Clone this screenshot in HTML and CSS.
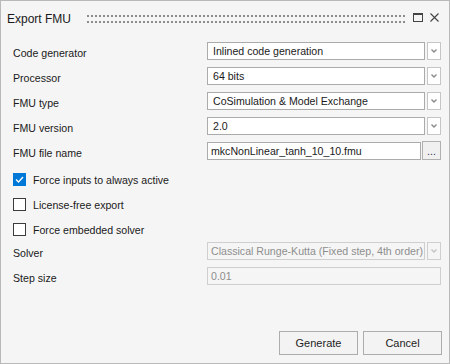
FILE: index.html
```html
<!DOCTYPE html>
<html>
<head>
<meta charset="utf-8">
<link rel="stylesheet" href="styles.css">
</head>
<body>
<div class="window">
  <div class="titlebar">
    <span class="title">Export FMU</span>
    <svg class="grip" width="320" height="8" viewBox="0 0 320 8"><defs><pattern id="dots" width="4" height="6" patternUnits="userSpaceOnUse"><rect width="2" height="2" fill="#8c8c8c"/></pattern></defs><rect width="320" height="8" fill="url(#dots)"/></svg>
    <div class="tb-icons">
      <svg class="ic-max" width="10" height="9" viewBox="0 0 10 9"><rect x="0.5" y="0.5" width="9" height="8" fill="none" stroke="#444" stroke-width="1"/><rect x="0" y="0" width="10" height="2" fill="#444"/></svg>
      <svg class="ic-close" width="9" height="9" viewBox="0 0 9 9"><path d="M0.5 0.5 L8.5 8.5 M8.5 0.5 L0.5 8.5" stroke="#444" stroke-width="1.1" fill="none"/></svg>
    </div>
  </div>
  <div class="form">
    <div class="row">
      <span class="label">Code generator</span>
      <div class="field combo"><div class="box">Inlined code generation</div><div class="arrow"><svg width="6" height="4" viewBox="0 0 6 4"><path d="M0.5 0.5 L3 3 L5.5 0.5" stroke="#8a8a8a" stroke-width="1.4" fill="none"/></svg></div></div>
    </div>
    <div class="row">
      <span class="label">Processor</span>
      <div class="field combo"><div class="box">64 bits</div><div class="arrow"><svg width="6" height="4" viewBox="0 0 6 4"><path d="M0.5 0.5 L3 3 L5.5 0.5" stroke="#8a8a8a" stroke-width="1.4" fill="none"/></svg></div></div>
    </div>
    <div class="row">
      <span class="label">FMU type</span>
      <div class="field combo"><div class="box">CoSimulation &amp; Model Exchange</div><div class="arrow"><svg width="6" height="4" viewBox="0 0 6 4"><path d="M0.5 0.5 L3 3 L5.5 0.5" stroke="#8a8a8a" stroke-width="1.4" fill="none"/></svg></div></div>
    </div>
    <div class="row">
      <span class="label">FMU version</span>
      <div class="field combo"><div class="box">2.0</div><div class="arrow"><svg width="6" height="4" viewBox="0 0 6 4"><path d="M0.5 0.5 L3 3 L5.5 0.5" stroke="#8a8a8a" stroke-width="1.4" fill="none"/></svg></div></div>
    </div>
    <div class="row">
      <span class="label">FMU file name</span>
      <div class="field file"><div class="box">mkcNonLinear_tanh_10_10.fmu</div><div class="browse">...</div></div>
    </div>
    <div class="checks">
      <div class="check"><span class="cb on"><svg width="13" height="13" viewBox="0 0 13 13"><path d="M3 6.5 L5.5 9 L10 4" stroke="#fff" stroke-width="1.3" fill="none"/></svg></span><span class="ctext">Force inputs to always active</span></div>
      <div class="check"><span class="cb"></span><span class="ctext">License-free export</span></div>
      <div class="check"><span class="cb"></span><span class="ctext">Force embedded solver</span></div>
    </div>
    <div class="row">
      <span class="label">Solver</span>
      <div class="field combo disabled"><div class="box">Classical Runge-Kutta (Fixed step, 4th order)</div><div class="arrow"><svg width="6" height="4" viewBox="0 0 6 4"><path d="M0.5 0.5 L3 3 L5.5 0.5" stroke="#c4c4c4" stroke-width="1.4" fill="none"/></svg></div></div>
    </div>
    <div class="row">
      <span class="label">Step size</span>
      <div class="field disabled"><div class="box">0.01</div></div>
    </div>
  </div>
  <div class="footer">
    <div class="btn">Generate</div>
    <div class="btn">Cancel</div>
  </div>
</div>
</body>
</html>
```

FILE: styles.css
```css
* { box-sizing: border-box; }
html, body { margin: 0; padding: 0; }
body { font-family: "Liberation Sans", Arial, sans-serif; font-size: 10.6px; color: #1a1a1a; }

.window {
  width: 450px;
  height: 364px;
  border: 1px solid #b9b9b9;
  background: #f5f5f5;
  display: flex;
  flex-direction: column;
}

.titlebar {
  height: 36px;
  display: flex;
  align-items: center;
  padding: 0 9px 0 6px;
}
.title { font-size: 12px; line-height: 14px; color: #1a1a1a; width: 80px; }
.grip { display: block; flex: none; }
.tb-icons { display: flex; align-items: center; margin-left: 6px; margin-top: -3px; gap: 7px; }
.tb-icons svg { display: block; }

.form { padding: 5px 8px 0 12px; display: flex; flex-direction: column; }
.row { height: 18px; display: flex; margin-bottom: 7px; }
.label { width: 194px; line-height: 13px; padding-top: 5px; }
.field { flex: 1; display: flex; gap: 2px; }
.box {
  flex: 1;
  height: 18px;
  background: #fff;
  border: 1px solid #ababab;
  padding: 0 0 0 5px;
  line-height: 16px;
  white-space: nowrap;
  overflow: hidden;
}
.arrow {
  width: 14px;
  height: 18px;
  background: #fff;
  border: 1px solid #c6c6c6;
  display: flex;
  align-items: center;
  justify-content: center;
}
.arrow svg { display: block; }
.file { gap: 1px; }
.file .box { padding-left: 3px; }
.browse {
  width: 19px;
  height: 19px;
  margin-top: -1px;
  background: #f0f0f0;
  border: 1px solid #b0b0b0;
  text-align: center;
  line-height: 18px;
  color: #3a2a5a;
}
.disabled .box { background: #f5f5f5; border-color: #cfcfcf; color: #8e8e8e; padding-left: 3px; }
.disabled .arrow { background: #f5f5f5; border-color: #cfcfcf; }

.checks { padding-top: 6px; display: flex; flex-direction: column; gap: 12px; margin-bottom: 6px; }
.check { display: flex; align-items: center; height: 13px; }
.cb {
  width: 13px;
  height: 13px;
  border: 1px solid #3c3c3c;
  background: #fff;
  margin-right: 7px;
  display: block;
}
.cb.on { background: #0078d7; border-color: #0078d7; }
.cb.on svg { display: block; margin: -1px 0 0 -1px; }
.ctext { line-height: 13px; padding-top: 1px; }

.footer {
  margin-top: auto;
  display: flex;
  justify-content: flex-end;
  gap: 5px;
  padding: 0 7px 8px 0;
}
.btn {
  width: 79px;
  height: 24px;
  border: 1px solid #adadad;
  background: #f3f3f3;
  text-align: center;
  line-height: 22px;
  color: #1e1e1e;
  font-size: 11px;
}
```
